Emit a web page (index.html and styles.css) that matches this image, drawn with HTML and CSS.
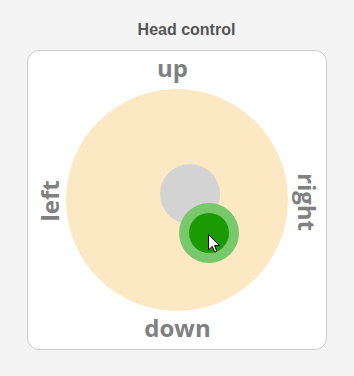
FILE: index.html
```html
<!DOCTYPE html>
<html>
<head>
<meta charset="utf-8">
<link rel="stylesheet" href="styles.css">
</head>
<body>
<div class="title">Head control</div>
<div class="card">
  <div class="pad"></div>
  <div class="home"></div>
  <div class="knob"><div class="knob-core"></div></div>
  <svg class="cursor" width="14" height="20" viewBox="-1 -1 14 20"><path d="M0.5 0.5 L0.5 16 L4.2 12.4 L6.8 18.2 L9 17.2 L6.5 11.6 L11.5 11.6 Z" fill="#fff" stroke="#000" stroke-width="1" stroke-linejoin="round"/></svg>
  <span class="lbl up">up</span>
  <span class="lbl down">down</span>
  <span class="lbl left">left</span>
  <span class="lbl right">right</span>
</div>
</body>
</html>
```

FILE: styles.css
```css
html, body {
  margin: 0;
  padding: 0;
  background: #f4f4f4;
}
body {
  width: 354px;
  height: 376px;
  overflow: hidden;
}
.title {
  padding: 20px 0 10px 19px;
  line-height: 20px;
  text-align: center;
  font-family: "Liberation Sans", Arial, sans-serif;
  font-weight: bold;
  font-size: 16px;
  color: #555;
}
.card {
  position: relative;
  margin-left: 27px;
  width: 300px;
  height: 300px;
  box-sizing: border-box;
  background: #fff;
  border: 1px solid #ccc;
  border-radius: 12px;
  display: flex;
  align-items: center;
  justify-content: center;
}
.pad {
  width: 222px;
  height: 222px;
  border-radius: 50%;
  background: #fde8c4;
}
.home {
  position: absolute;
  left: 132px;
  top: 113px;
  width: 60px;
  height: 60px;
  border-radius: 50%;
  background: #d3d3d3;
}
.knob {
  position: absolute;
  left: 151px;
  top: 152px;
  width: 60px;
  height: 60px;
  border-radius: 50%;
  background: #78c86c;
  display: flex;
  align-items: center;
  justify-content: center;
}
.knob-core {
  width: 40px;
  height: 40px;
  border-radius: 50%;
  background: #1b9a03;
}
.cursor {
  position: absolute;
  left: 179px;
  top: 182px;
}
.lbl {
  position: absolute;
  font-family: "Open Sans", sans-serif;
  font-weight: bold;
  font-size: 24px;
  line-height: 30px;
  color: #808080;
  white-space: nowrap;
  transform: translate(-50%, -50%);
}
.up {
  left: 144.5px;
  top: 17px;
}
.down {
  left: 149.5px;
  top: 277px;
}
.left {
  left: 22px;
  top: 150px;
  transform: translate(-50%, -50%) rotate(-90deg);
}
.right {
  left: 279px;
  top: 150.5px;
  transform: translate(-50%, -50%) rotate(90deg);
}
```
